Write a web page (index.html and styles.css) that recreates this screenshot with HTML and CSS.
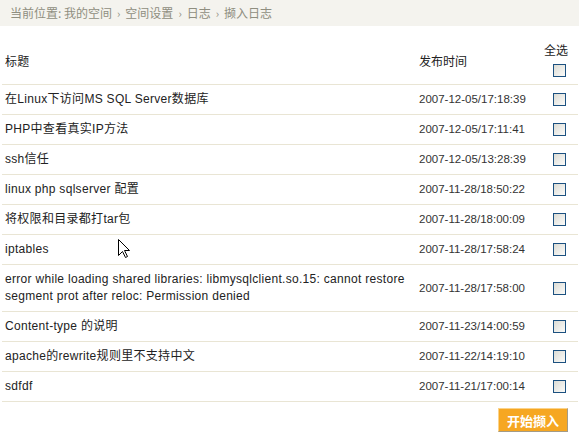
FILE: index.html
```html
<!DOCTYPE html>
<html>
<head>
    <title>撷入日志</title>
    <link rel="stylesheet" href="styles.css">
</head>
<body>
    <div class="crumbs">
        当前位置: 我的空间<span class="sep">›</span>空间设置<span class="sep">›</span>日志<span class="sep">›</span>撷入日志
    </div>

    <table class="blog-list">
        <thead>
            <tr>
                <th class="col-title">标题</th>
                <th class="col-date">发布时间</th>
                <th class="col-check">
                    <span class="all-label">全选</span>
                    <input type="checkbox" class="box" id="checkAll">
                </th>
            </tr>
        </thead>
        <tbody id="rows"></tbody>
    </table>

    <div class="actions">
        <button class="btn-import">开始撷入</button>
    </div>

    <svg class="pointer" width="13" height="20" viewBox="0 0 13 20">
        <path d="M0.5 0.5 L0.5 16.5 L4.5 12.5 L7.5 18.5 L9.5 17.5 L6.5 11.5 L11.5 11.5 Z" fill="#fff" stroke="#000" stroke-width="1"/>
    </svg>

    <script>
        const posts = [
            ["在Linux下访问MS SQL Server数据库", "2007-12-05/17:18:39"],
            ["PHP中查看真实IP方法", "2007-12-05/17:11:41"],
            ["ssh信任", "2007-12-05/13:28:39"],
            ["linux php sqlserver 配置", "2007-11-28/18:50:22"],
            ["将权限和目录都打tar包", "2007-11-28/18:00:09"],
            ["iptables", "2007-11-28/17:58:24"],
            ["error while loading shared libraries: libmysqlclient.so.15: cannot restore segment prot after reloc: Permission denied", "2007-11-28/17:58:00"],
            ["Content-type 的说明", "2007-11-23/14:00:59"],
            ["apache的rewrite规则里不支持中文", "2007-11-22/14:19:10"],
            ["sdfdf", "2007-11-21/17:00:14"]
        ];

        document.getElementById('rows').innerHTML = posts.map(p => `
            <tr>
                <td class="col-title">${p[0]}</td>
                <td class="col-date">${p[1]}</td>
                <td class="col-check"><input type="checkbox" class="box item"></td>
            </tr>
        `).join('');

        document.getElementById('checkAll').addEventListener('change', function() {
            document.querySelectorAll('.item').forEach(b => b.checked = this.checked);
        });
    </script>
</body>
</html>
```

FILE: styles.css
```css
body {
    margin: 0;
    font-family: "Liberation Sans", "Noto Sans CJK SC", sans-serif;
    font-size: 12px;
    color: #222;
    background: #fff;
    position: relative;
}
.crumbs {
    height: 26px;
    line-height: 26px;
    padding-left: 10px;
    background: #f4f3ee;
    color: #8f8e80;
    font-family: "Noto Sans CJK SC", sans-serif;
    font-size: 12px;
}
.sep {
    margin: 0 5px;
    font-size: 11px;
}
.blog-list {
    width: 573px;
    margin: 10px 2px 0;
    border-collapse: collapse;
    table-layout: fixed;
}
.blog-list th {
    height: 48px;
    font-weight: normal;
    text-align: left;
    vertical-align: middle;
    color: #222;
    font-family: "Noto Sans CJK SC", sans-serif;
    border-bottom: 1px solid #e9e5d4;
    padding: 0 3px;
}
.blog-list td {
    padding: 6px 3px;
    line-height: 17px;
    vertical-align: middle;
    border-bottom: 1px solid #e9e5d4;
}
.col-title {
    width: 408px;
    letter-spacing: 0.3px;
}
.col-date {
    width: 114px;
}
td.col-date {
    font-size: 11.5px;
    color: #333;
}
.col-check {
    width: 28px;
}
.blog-list .col-check {
    text-align: right;
    padding-right: 11px;
}
.all-label {
    display: block;
    line-height: 14px;
    margin-right: -1px;
}
.box {
    -webkit-appearance: none;
    appearance: none;
    width: 13px;
    height: 13px;
    margin: 0 1px 0 0;
    border: 1px solid #1c5180;
    background: linear-gradient(135deg, #dcdcd5, #fbfbf9);
    vertical-align: middle;
    display: inline-block;
}
th .box {
    margin-top: 6px;
}
.box:checked {
    background: #fff;
    box-shadow: inset 0 0 0 3px #fff, inset 0 0 0 6px #21a121;
}
.actions {
    text-align: right;
    padding: 6px 11px 0 0;
}
.btn-import {
    width: 70px;
    height: 24px;
    border: 1px solid;
    border-color: #fbd38a #a39b87 #a39b87 #fbd38a;
    background: #f6a722;
    color: #fff;
    font-family: "Noto Sans CJK SC", sans-serif;
    font-size: 13px;
    font-weight: bold;
    padding: 0;
    cursor: pointer;
}
.btn-import:hover {
    background: #f09a10;
}
.pointer {
    position: absolute;
    left: 118px;
    top: 239px;
}
```
